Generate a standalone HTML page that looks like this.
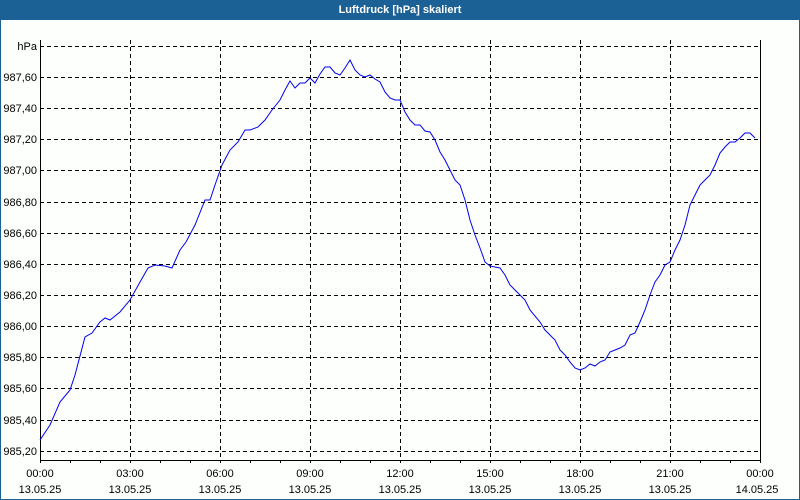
<!DOCTYPE html>
<html><head><style>
body{margin:0;width:800px;height:500px;overflow:hidden;background:#fff;font-family:"Liberation Sans",sans-serif}
.win{position:absolute;left:0;top:0;width:798px;height:499px;border:1px solid #1c6196;border-top:none;background:#fdfffd}
.title{position:absolute;left:0;top:0;width:800px;height:20px;background:#1c6196;color:#fff;font-weight:bold;font-size:11px;text-align:center;line-height:20px}
svg{position:absolute;left:0;top:0}
text{font-family:"Liberation Sans",sans-serif;font-size:11px;fill:#000}
</style></head><body>
<div class="win"></div>
<div class="title">Luftdruck [hPa] skaliert</div>
<svg width="800" height="500">
<g stroke="#000" stroke-width="1" stroke-dasharray="4,3" shape-rendering="crispEdges">
<line x1="40" x2="760" y1="46.5" y2="46.5"/>
<line x1="40" x2="760" y1="77.5" y2="77.5"/>
<line x1="40" x2="760" y1="108.5" y2="108.5"/>
<line x1="40" x2="760" y1="139.5" y2="139.5"/>
<line x1="40" x2="760" y1="170.5" y2="170.5"/>
<line x1="40" x2="760" y1="202.5" y2="202.5"/>
<line x1="40" x2="760" y1="233.5" y2="233.5"/>
<line x1="40" x2="760" y1="264.5" y2="264.5"/>
<line x1="40" x2="760" y1="295.5" y2="295.5"/>
<line x1="40" x2="760" y1="326.5" y2="326.5"/>
<line x1="40" x2="760" y1="357.5" y2="357.5"/>
<line x1="40" x2="760" y1="388.5" y2="388.5"/>
<line x1="40" x2="760" y1="420.5" y2="420.5"/>
<line x1="40" x2="760" y1="451.5" y2="451.5"/>
<line x1="130.5" x2="130.5" y1="40" y2="460"/>
<line x1="220.5" x2="220.5" y1="40" y2="460"/>
<line x1="310.5" x2="310.5" y1="40" y2="460"/>
<line x1="400.5" x2="400.5" y1="40" y2="460"/>
<line x1="490.5" x2="490.5" y1="40" y2="460"/>
<line x1="580.5" x2="580.5" y1="40" y2="460"/>
<line x1="670.5" x2="670.5" y1="40" y2="460"/>
</g>
<g stroke="#000" shape-rendering="crispEdges">
<path d="M40.5 40V460.5H760.5V40" fill="none"/>
<path d="M70.5 460v3M100.5 460v3M160.5 460v3M190.5 460v3M250.5 460v3M280.5 460v3M340.5 460v3M370.5 460v3M430.5 460v3M460.5 460v3M520.5 460v3M550.5 460v3M610.5 460v3M640.5 460v3M700.5 460v3M730.5 460v3M40.5 460v3M130.5 460v3M220.5 460v3M310.5 460v3M400.5 460v3M490.5 460v3M580.5 460v3M670.5 460v3M760.5 460v3"/>
</g>
<polyline fill="none" stroke="#0000ee" stroke-width="1" points="40,440 50,425 60,402 70,390 75,375 85,337 92,333 100,322 105,318 110,320 120,312 130,300 140,282 148,268 155,265 165,266 172,268 180,250 186,242 195,225 205,200 210,200 215,185 222,165 230,150 238,142 245,130 250,130 258,127 265,120 272,110 280,100 285,90 290,81 295,88 300,83 305,83 310,78 315,83 320,74 325,67 330,67 335,73 340,75 345,68 350,60 355,70 360,75 365,77 370,75 375,79 380,82 385,92 390,98 395,100 400,100 405,112 410,120 415,125 420,125 425,131 430,132 435,140 440,152 445,160 450,170 455,180 460,185 465,200 470,220 475,235 480,248 485,262 490,266 500,268 505,275 510,285 515,290 520,295 525,300 530,310 540,322 545,330 555,340 560,350 565,355 570,362 575,368 580,370 585,368 590,364 595,366 600,362 605,360 610,352 620,348 625,345 630,335 635,333 640,322 645,310 650,295 655,282 660,275 665,265 670,262 675,250 680,240 685,225 690,205 695,195 700,185 705,180 710,175 715,165 720,153 725,147 730,142 735,142 740,138 745,133 750,133 755,138"/>
<g text-anchor="end">
<text x="37" y="50">hPa</text>
<text x="37" y="81">987,60</text>
<text x="37" y="112">987,40</text>
<text x="37" y="143">987,20</text>
<text x="37" y="174">987,00</text>
<text x="37" y="206">986,80</text>
<text x="37" y="237">986,60</text>
<text x="37" y="268">986,40</text>
<text x="37" y="299">986,20</text>
<text x="37" y="330">986,00</text>
<text x="37" y="361">985,80</text>
<text x="37" y="392">985,60</text>
<text x="37" y="424">985,40</text>
<text x="37" y="455">985,20</text>
</g>
<g text-anchor="middle">
<text x="40" y="477">00:00</text><text x="40" y="493">13.05.25</text>
<text x="130" y="477">03:00</text><text x="130" y="493">13.05.25</text>
<text x="220" y="477">06:00</text><text x="220" y="493">13.05.25</text>
<text x="310" y="477">09:00</text><text x="310" y="493">13.05.25</text>
<text x="400" y="477">12:00</text><text x="400" y="493">13.05.25</text>
<text x="490" y="477">15:00</text><text x="490" y="493">13.05.25</text>
<text x="580" y="477">18:00</text><text x="580" y="493">13.05.25</text>
<text x="670" y="477">21:00</text><text x="670" y="493">13.05.25</text>
<text x="760" y="477">00:00</text><text x="757" y="493">14.05.25</text>
</g>
</svg>
</body></html>
